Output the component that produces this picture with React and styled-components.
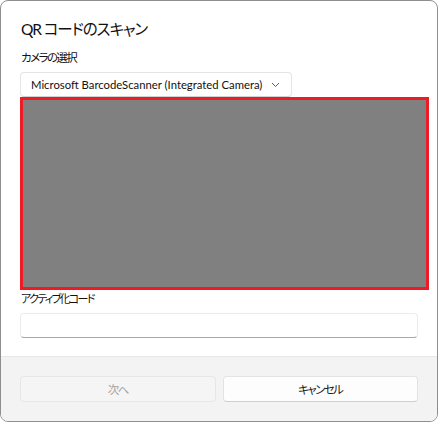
import React from 'react'
import styled, { createGlobalStyle } from 'styled-components'

const Global = createGlobalStyle`
  html, body { margin: 0; padding: 0; background: #ffffff; }
  * { box-sizing: border-box; }
`

export default function App() {
  return (
    <>
      <Global />
      <Window>
        <Body>
          <Title>QR コードのスキャン</Title>
          <Label>カメラの選択</Label>
          <Select>
            <SelectText>Microsoft BarcodeScanner (Integrated Camera)</SelectText>
            <Chevron width="9" height="6" viewBox="0 0 9 6">
              <path d="M1 1 L4.5 4.5 L8 1" fill="none" stroke="#5f5f5f" strokeWidth="1" />
            </Chevron>
          </Select>
          <Preview />
          <CodeLabel>アクティブ化コード</CodeLabel>
          <TextInput />
        </Body>
        <Footer>
          <Button disabled>次へ</Button>
          <Button>キャンセル</Button>
        </Footer>
      </Window>
    </>
  )
}

const Window = styled.div`
  width: 438px;
  height: 422px;
  border: 1px solid #8f8f8f;
  border-radius: 8px;
  overflow: hidden;
  display: flex;
  flex-direction: column;
  background: #ffffff;
  font-family: "Lato", "Noto Sans CJK JP", sans-serif;
  font-feature-settings: "palt";
  color: #111111;
`

const Body = styled.div`
  flex: 1;
  padding: 15px 19px 0 19px;
  display: flex;
  flex-direction: column;
  border-bottom: 1px solid #e8e8e8;
`

const Title = styled.div`
  font-size: 15.5px;
  line-height: 26px;
  letter-spacing: -1.1px;
  margin-left: 1px;
`

const Label = styled.div`
  font-size: 11.5px;
  line-height: 18px;
  letter-spacing: -1.6px;
  margin-top: 7px;
  margin-left: 1px;
`

const Select = styled.div`
  margin-top: 5px;
  width: 272px;
  height: 25px;
  border: 1px solid #e5e5e5;
  border-bottom-color: #d0d0d0;
  border-radius: 4px;
  display: flex;
  align-items: center;
  justify-content: space-between;
  padding: 0 11px 0 10px;
`

const SelectText = styled.span`
  font-size: 11.3px;
  white-space: nowrap;
`

const Chevron = styled.svg`
  flex-shrink: 0;
`

const Preview = styled.div`
  height: 193px;
  margin-right: -11px;
  background: #808080;
  border: 3px solid #ed1c24;
`

const CodeLabel = styled.div`
  font-size: 11px;
  line-height: 18px;
  letter-spacing: -1.7px;
  margin-left: 1px;
`

const TextInput = styled.div`
  margin-top: 5px;
  height: 25px;
  border: 1px solid #ececec;
  border-bottom: 1px solid #a8a8a8;
  border-radius: 4px;
  background: #ffffff;
`

const Footer = styled.div`
  background: #f3f3f3;
  padding: 19px 19px 19px 19px;
  display: grid;
  grid-template-columns: 1fr 1fr;
  gap: 7px;
`

const Button = styled.div`
  height: 26px;
  border-radius: 4px;
  display: flex;
  align-items: center;
  justify-content: center;
  font-size: 11.5px;
  letter-spacing: -1.6px;
  border: 1px solid ${p => (p.disabled ? '#e6e6e6' : '#e3e3e3')};
  border-bottom-color: ${p => (p.disabled ? '#e6e6e6' : '#cfcfcf')};
  background: ${p => (p.disabled ? '#f5f5f5' : '#fdfdfd')};
  color: ${p => (p.disabled ? '#a2a2a2' : '#1b1b1b')};
`
